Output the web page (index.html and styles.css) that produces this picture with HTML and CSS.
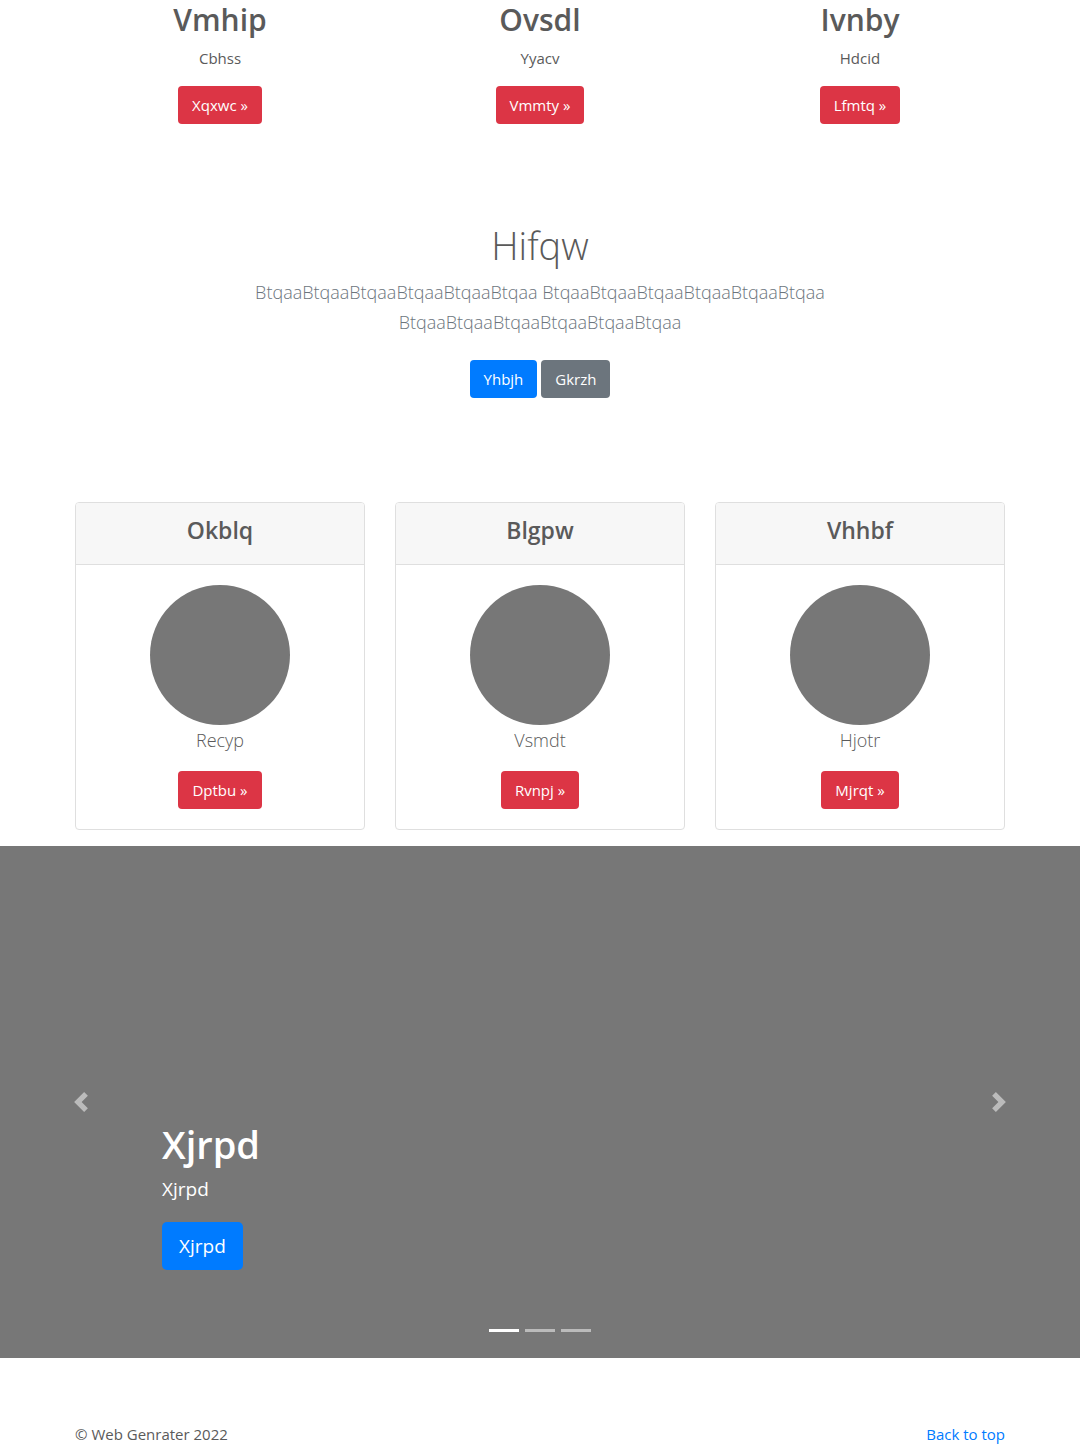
FILE: index.html
```html
<!DOCTYPE html>
<html lang="en">
<head>
<meta charset="utf-8">
<meta name="viewport" content="width=device-width, initial-scale=1">
<title>Web Genrater</title>
<link rel="stylesheet" href="styles.css">
</head>
<body>
<main>
  <section class="container columns features">
    <article><h2>Vmhip</h2><p>Cbhss</p><a class="btn btn-danger" href="#">Xqxwc »</a></article>
    <article><h2>Ovsdl</h2><p>Yyacv</p><a class="btn btn-danger" href="#">Vmmty »</a></article>
    <article><h2>Ivnby</h2><p>Hdcid</p><a class="btn btn-danger" href="#">Lfmtq »</a></article>
  </section>
  <section class="hero">
    <h1>Hifqw</h1>
    <p class="lead">BtqaaBtqaaBtqaaBtqaaBtqaaBtqaa BtqaaBtqaaBtqaaBtqaaBtqaaBtqaa<br>BtqaaBtqaaBtqaaBtqaaBtqaaBtqaa</p>
    <div class="actions"><a class="btn btn-primary" href="#">Yhbjh</a><a class="btn btn-secondary" href="#">Gkrzh</a></div>
  </section>
  <section class="container columns cards">
    <article class="card"><header><h4>Okblq</h4></header><div class="card-body"><div class="circle"></div><p class="lead">Recyp</p><a class="btn btn-danger" href="#">Dptbu »</a></div></article>
    <article class="card"><header><h4>Blgpw</h4></header><div class="card-body"><div class="circle"></div><p class="lead">Vsmdt</p><a class="btn btn-danger" href="#">Rvnpj »</a></div></article>
    <article class="card"><header><h4>Vhhbf</h4></header><div class="card-body"><div class="circle"></div><p class="lead">Hjotr</p><a class="btn btn-danger" href="#">Mjrqt »</a></div></article>
  </section>
  <section class="carousel">
    <button class="control" type="button" aria-label="Previous"><svg viewBox="0 0 8 8" aria-hidden="true"><path d="M5.25 0l-4 4 4 4 1.5-1.5L4.25 4l2.5-2.5L5.25 0z"/></svg></button>
    <div class="slide">
      <div class="caption"><h1>Xjrpd</h1><p>Xjrpd</p><a class="btn btn-primary btn-lg" href="#">Xjrpd</a></div>
      <div class="indicators"><button class="active" type="button" aria-label="Slide 1"></button><button type="button" aria-label="Slide 2"></button><button type="button" aria-label="Slide 3"></button></div>
    </div>
    <button class="control" type="button" aria-label="Next"><svg viewBox="0 0 8 8" aria-hidden="true"><path d="M2.75 0l-1.5 1.5L3.75 4l-2.5 2.5L2.75 8l4-4-4-4z"/></svg></button>
  </section>
</main>
<footer class="container footer"><p>© Web Genrater 2022</p><a href="#">Back to top</a></footer>
</body>
</html>
```
FILE: styles.css
```css
* { box-sizing: border-box; }
body {
  margin: 0;
  background: #fff;
  color: #5a5a5a;
  font-family: "Segoe UI", "Open Sans", "Noto Sans", sans-serif;
  font-size: 15px;
  line-height: 24px;
}
h1, h2, h4, p { margin: 0; }
a { color: #007bff; text-decoration: none; }
.container { width: 100%; max-width: 960px; margin: 0 auto; padding: 0 15px; }
.columns { display: grid; grid-template-columns: repeat(3, 1fr); column-gap: 30px; text-align: center; }
.features h2 { margin-bottom: 6px; font-size: 30px; line-height: 40px; font-weight: 600; }
.features p { margin-bottom: 16px; }
.btn {
  display: inline-block;
  padding: 6px 13px;
  border: 1px solid transparent;
  border-radius: 4px;
  color: #fff;
  font-size: 15px;
  line-height: 24px;
  text-align: center;
  vertical-align: middle;
}
.btn-primary { background: #007bff; }
.btn-secondary { background: #6c757d; }
.btn-danger { background: #dc3545; }
.btn-lg { padding: 8px 16px; border-radius: 5px; font-size: 19px; line-height: 30px; }
.hero { padding: 97px 15px 104px; text-align: center; }
.hero h1 { margin-bottom: 8px; font-size: 38px; line-height: 48px; font-weight: 300; }
.lead { margin-bottom: 16px; font-size: 18px; line-height: 30px; font-weight: 300; }
.hero .lead { margin-bottom: 23px; color: #6c757d; }
.actions { display: flex; justify-content: center; gap: 4px; }
.card { border: 1px solid #dfdfdf; border-radius: 4px; }
.card header { padding: 12px 20px; background: #f7f7f7; border-bottom: 1px solid #dfdfdf; border-radius: 3px 3px 0 0; }
.card h4 { margin-bottom: 6px; font-size: 23px; line-height: 31px; font-weight: 600; }
.card-body { padding: 20px; }
.circle { width: 140px; height: 140px; margin: 0 auto; border-radius: 50%; background: #777; }
.cards { margin-bottom: 16px; }
.carousel { display: grid; grid-template-columns: 15% 1fr 15%; min-height: 512px; background: #777; color: #fff; }
.control { display: flex; align-items: center; justify-content: center; padding: 0; border: 0; background: none; color: #fff; opacity: .5; }
.control svg { width: 20px; height: 20px; fill: currentColor; }
.slide { display: flex; flex-direction: column; justify-content: flex-end; }
.caption { margin-bottom: 59px; }
.caption h1 { margin-bottom: 6px; font-size: 38px; line-height: 48px; font-weight: 600; }
.caption p { margin-bottom: 18px; font-size: 19px; line-height: 30px; }
.indicators { display: flex; justify-content: center; gap: 6px; margin-bottom: 26px; }
.indicators button { width: 30px; height: 3px; padding: 0; border: 0; background: #fff; opacity: .5; }
.indicators .active { opacity: 1; }
.footer { display: flex; justify-content: space-between; padding-top: 64px; }
```
